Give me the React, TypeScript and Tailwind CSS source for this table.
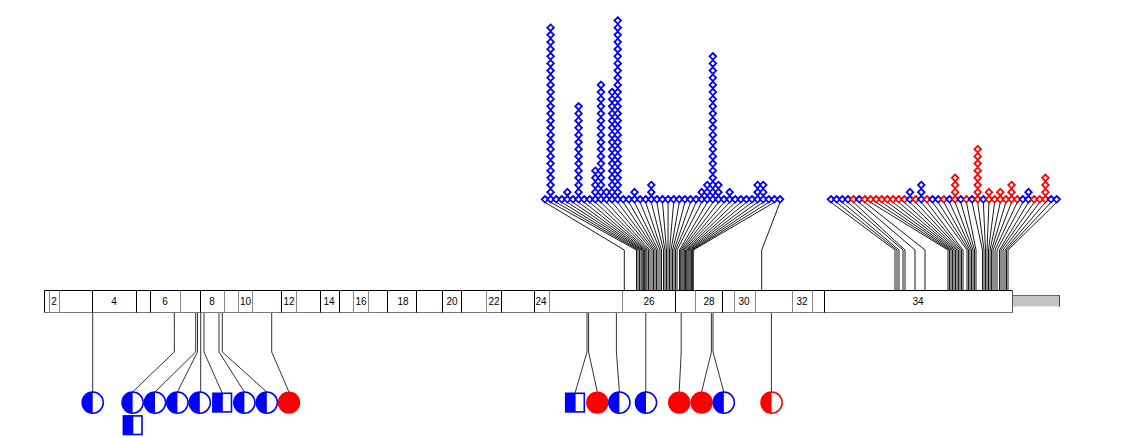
import React from "react";

const BLUE = "#0000ff";
const RED = "#ff0000";

const BAR_TOP = 290.5;
const BAR_BOT = 312.5;

const bounds: [number, string][] = [
  [44.5, "#000"], [49.5, "#888"], [59.5, "#888"], [92.5, "#000"], [136.5, "#000"], [150.5, "#000"],
  [180.5, "#888"], [200.5, "#000"], [224.5, "#888"], [238.5, "#888"], [252.5, "#888"], [281.5, "#000"],
  [296.5, "#888"], [320.5, "#000"], [339.5, "#000"], [353.5, "#888"], [368.5, "#888"], [387.5, "#000"],
  [416.5, "#000"], [442.5, "#000"], [461.5, "#000"], [486.5, "#888"], [501.5, "#000"], [534.5, "#000"],
  [549.5, "#888"], [622.5, "#888"], [675.5, "#000"], [695.5, "#888"], [722.5, "#000"], [734.5, "#888"],
  [755.5, "#888"], [792.5, "#888"], [812.5, "#888"], [824.5, "#000"], [1012.5, "#555"],
];

const labels: [string, number][] = [
  ["2", 54], ["4", 114], ["6", 165], ["8", 212], ["10", 245.5], ["12", 289], ["14", 329], ["16", 361],
  ["18", 403], ["20", 452], ["22", 494], ["24", 541], ["26", 649], ["28", 709], ["30", 744], ["32", 802], ["34", 918],
];

const BASE_Y = 199.3;
const VSTEP = 7.15;

const LEFT_N = 43;
const LEFT_X0 = 545;
const LEFT_DX = (780 - 545) / 42;
const leftCols: Record<number, number> = {
  1: 24, 4: 1, 6: 13, 9: 4, 10: 16, 11: 1, 12: 15, 13: 25, 16: 1, 19: 2,
  28: 1, 29: 2, 30: 20, 31: 2, 33: 1, 38: 2, 39: 2,
};
const leftTargets = [
  624.3, 636.5, 638, 639.5, 641, 642.2, 643.4, 644.6, 645.8, 647, 648.5, 650,
  652, 653.5, 655, 656.5, 658, 660, 661.5,
  663.5, 665, 666.5, 668, 669.5, 671, 672.5, 674, 675.5, 677,
  679.5, 680.7, 681.9, 683.1, 684.3, 685.5, 686.7, 687.9, 689, 690.2, 691.4, 692.4, 693.3,
  761.7,
];

const RIGHT_N = 41;
const RIGHT_X0 = 831;
const RIGHT_DX = (1056.7 - 831) / 40;
const rightColors = "BBBBRBRRRRRRRRBRBRBBRBRBRBRBRRRRRRBBRRRBB";
const rightCols: Record<number, number> = { 14: 1, 16: 2, 22: 3, 26: 7, 28: 1, 30: 1, 32: 2, 35: 1, 38: 3 };
const rightTargets = [
  895, 897, 899, 903, 905, 915, 925, 948, 949.5, 951, 952.5, 954, 955.5, 957, 958.5, 960, 961.5, 963,
  967, 968.5, 970, 971.5, 973, 974.5, 976, 982.5, 984, 985.5, 987, 988.5, 990, 991.5, 993, 995, 997,
  999.5, 1001, 1003, 1005, 1006.5, 1008,
];

function Diamond({ x, y, c }: { x: number; y: number; c: string }) {
  const s = 3.3;
  return (
    <polygon
      points={`${x},${y - s} ${x + s},${y} ${x},${y + s} ${x - s},${y}`}
      fill="#fff"
      stroke={c}
      strokeWidth={1.8}
    />
  );
}

type Glyph = { kind: "half" | "full" | "square"; color: string; x: number; src: number };

const CY = 402.6;
const R = 10.6;

const glyphs: Glyph[] = [
  { kind: "half", color: BLUE, x: 92.7, src: 92.7 },
  { kind: "half", color: BLUE, x: 132.6, src: 174.3 },
  { kind: "half", color: BLUE, x: 155, src: 195.7 },
  { kind: "half", color: BLUE, x: 177.4, src: 197.5 },
  { kind: "half", color: BLUE, x: 199.8, src: 200.7 },
  { kind: "square", color: BLUE, x: 222.2, src: 204 },
  { kind: "half", color: BLUE, x: 244.4, src: 219 },
  { kind: "half", color: BLUE, x: 266.8, src: 222.3 },
  { kind: "full", color: RED, x: 289, src: 271.7 },
  { kind: "square", color: BLUE, x: 575, src: 587 },
  { kind: "full", color: RED, x: 597.3, src: 588.6 },
  { kind: "half", color: BLUE, x: 619.4, src: 616.4 },
  { kind: "half", color: BLUE, x: 646, src: 645.8 },
  { kind: "full", color: RED, x: 679.2, src: 681.2 },
  { kind: "full", color: RED, x: 701.6, src: 711.4 },
  { kind: "half", color: BLUE, x: 723.8, src: 713 },
  { kind: "half", color: RED, x: 771.6, src: 771.4 },
];

function GlyphShape({ g, y }: { g: Glyph; y: number }) {
  if (g.kind === "full") {
    return <circle cx={g.x} cy={y} r={R + 0.6} fill={g.color} />;
  }
  if (g.kind === "half") {
    return (
      <g>
        <circle cx={g.x} cy={y} r={R} fill="#fff" stroke={g.color} strokeWidth={1.5} />
        <path d={`M ${g.x} ${y - R} A ${R} ${R} 0 0 0 ${g.x} ${y + R} Z`} fill={g.color} />
      </g>
    );
  }
  const s = 18.6;
  return (
    <g>
      <rect x={g.x - s / 2} y={y - s / 2} width={s} height={s} fill="#fff" stroke={g.color} strokeWidth={1.6} />
      <rect x={g.x - s / 2} y={y - s / 2} width={s / 2 + 0.6} height={s} fill={g.color} />
    </g>
  );
}

export default function App() {
  const leftDiamonds: React.ReactNode[] = [];
  const fanLines: React.ReactNode[] = [];

  for (let i = 0; i < LEFT_N; i++) {
    const x = LEFT_X0 + i * LEFT_DX;
    const t = leftTargets[i];
    fanLines.push(
      <polyline key={`lf${i}`} points={`${x},${BASE_Y + 3} ${t},250 ${t},${BAR_TOP}`} fill="none" stroke="#000" strokeWidth={0.9} />
    );
  }
  for (let i = 0; i < RIGHT_N; i++) {
    const x = RIGHT_X0 + i * RIGHT_DX;
    const t = rightTargets[i];
    fanLines.push(
      <polyline key={`rf${i}`} points={`${x},${BASE_Y + 3} ${t},250 ${t},${BAR_TOP}`} fill="none" stroke="#000" strokeWidth={0.9} />
    );
  }

  for (let i = 0; i < LEFT_N; i++) {
    const x = LEFT_X0 + i * LEFT_DX;
    const h = leftCols[i] || 0;
    for (let k = 0; k <= h; k++) {
      leftDiamonds.push(<Diamond key={`ld${i}-${k}`} x={x} y={BASE_Y - k * VSTEP} c={BLUE} />);
    }
  }
  const rightDiamonds: React.ReactNode[] = [];
  for (let i = 0; i < RIGHT_N; i++) {
    const x = RIGHT_X0 + i * RIGHT_DX;
    const c = rightColors[i] === "R" ? RED : BLUE;
    const h = rightCols[i] || 0;
    for (let k = 0; k <= h; k++) {
      rightDiamonds.push(<Diamond key={`rd${i}-${k}`} x={x} y={BASE_Y - k * VSTEP} c={c} />);
    }
  }

  return (
    <div className="w-[1129px] h-[438px] bg-white overflow-hidden">
      <svg width={1129} height={438} viewBox="0 0 1129 438" className="block">
        {fanLines}
        {leftDiamonds}
        {rightDiamonds}

        {glyphs.map((g, i) => {
          const endY = g.kind === "square" ? CY - 9.5 : CY - R;
          const pts =
            Math.abs(g.src - g.x) < 1.5
              ? `${g.src},${BAR_BOT} ${g.src},${endY}`
              : `${g.src},${BAR_BOT} ${g.src},352 ${g.x},${endY}`;
          return <polyline key={`bl${i}`} points={pts} fill="none" stroke="#333" strokeWidth={1} />;
        })}

        <rect x={1012.5} y={295.5} width={47} height={11} fill="#c3c3c3" />
        <line x1={1012.5} y1={295.5} x2={1059.5} y2={295.5} stroke="#666" strokeWidth={1} />
        <line x1={1059.5} y1={295} x2={1059.5} y2={306.5} stroke="#444" strokeWidth={1} />

        <rect x={44.5} y={BAR_TOP} width={968} height={BAR_BOT - BAR_TOP} fill="#fff" />
        <line x1={44.5} y1={BAR_TOP} x2={1012.5} y2={BAR_TOP} stroke="#000" strokeWidth={1} />
        <line x1={44.5} y1={BAR_BOT} x2={1012.5} y2={BAR_BOT} stroke="#777" strokeWidth={1} />
        {bounds.map(([x, c], i) => (
          <line key={`b${i}`} x1={x} y1={BAR_TOP} x2={x} y2={BAR_BOT} stroke={c} strokeWidth={1} />
        ))}
        {labels.map(([t, x]) => (
          <text
            key={t}
            x={x}
            y={305}
            textAnchor="middle"
            fontSize={10}
            fill="#000"
            style={{ fontFamily: '"Liberation Sans", Arial, sans-serif' }}
          >
            {t}
          </text>
        ))}

        {glyphs.map((g, i) => (
          <GlyphShape key={`g${i}`} g={g} y={CY} />
        ))}
        <GlyphShape g={{ kind: "square", color: BLUE, x: 132.7, src: 0 }} y={425.2} />
      </svg>
    </div>
  );
}
